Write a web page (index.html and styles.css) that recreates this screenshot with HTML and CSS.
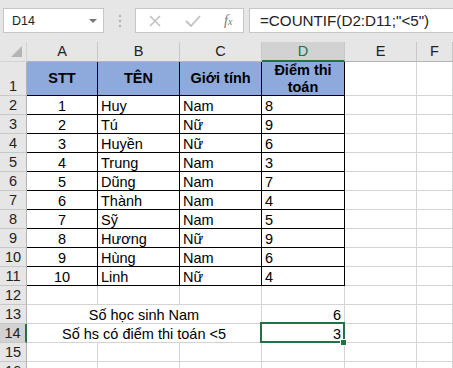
FILE: index.html
```html
<!DOCTYPE html>
<html>
<head>
  <meta charset="utf-8">
  <title>Bảng điểm</title>
  <link rel="stylesheet" href="styles.css">
</head>
<body>

  <div class="thanh-cong-thuc">
    <div class="o-ten">
      <span>D14</span>
      <span class="mui-ten"></span>
    </div>
    <div class="cham">
      <svg width="4" height="14" viewBox="0 0 4 14"><circle cx="2" cy="2" r="1.2" fill="#b4b4b4"/><circle cx="2" cy="7" r="1.2" fill="#b4b4b4"/><circle cx="2" cy="12" r="1.2" fill="#b4b4b4"/></svg>
    </div>
    <div class="nut-cong-thuc">
      <svg class="nut" width="14" height="14" viewBox="0 0 14 14"><path d="M2 2 L12 12 M12 2 L2 12" stroke="#c0c0c0" stroke-width="1.6" fill="none"/></svg>
      <svg class="nut" width="16" height="14" viewBox="0 0 16 14"><path d="M1 7 L6 12 L15 2" stroke="#c0c0c0" stroke-width="1.8" fill="none"/></svg>
      <span class="fx">f<small>x</small></span>
    </div>
    <div class="o-cong-thuc">=COUNTIF(D2:D11;"&lt;5")</div>
  </div>

  <div class="bang">
    <!-- tiêu đề cột -->
    <div class="goc"><span class="tam-giac"></span></div>
    <div class="tc">A</div>
    <div class="tc">B</div>
    <div class="tc">C</div>
    <div class="tc chon">D</div>
    <div class="tc">E</div>
    <div class="tc">F</div>

    <!-- hàng 1 -->
    <div class="th">1</div>
    <div class="o dau">STT</div>
    <div class="o dau">TÊN</div>
    <div class="o dau">Giới tính</div>
    <div class="o dau">Điểm thi toán</div>
    <div class="o"></div>
    <div class="o"></div>

    <div class="th">2</div>
    <div class="o vien giua">1</div><div class="o vien">Huy</div><div class="o vien">Nam</div><div class="o vien">8</div><div class="o"></div><div class="o"></div>
    <div class="th">3</div>
    <div class="o vien giua">2</div><div class="o vien">Tú</div><div class="o vien">Nữ</div><div class="o vien">9</div><div class="o"></div><div class="o"></div>
    <div class="th">4</div>
    <div class="o vien giua">3</div><div class="o vien">Huyền</div><div class="o vien">Nữ</div><div class="o vien">6</div><div class="o"></div><div class="o"></div>
    <div class="th">5</div>
    <div class="o vien giua">4</div><div class="o vien">Trung</div><div class="o vien">Nam</div><div class="o vien">3</div><div class="o"></div><div class="o"></div>
    <div class="th">6</div>
    <div class="o vien giua">5</div><div class="o vien">Dũng</div><div class="o vien">Nam</div><div class="o vien">7</div><div class="o"></div><div class="o"></div>
    <div class="th">7</div>
    <div class="o vien giua">6</div><div class="o vien">Thành</div><div class="o vien">Nam</div><div class="o vien">4</div><div class="o"></div><div class="o"></div>
    <div class="th">8</div>
    <div class="o vien giua">7</div><div class="o vien">Sỹ</div><div class="o vien">Nam</div><div class="o vien">5</div><div class="o"></div><div class="o"></div>
    <div class="th">9</div>
    <div class="o vien giua">8</div><div class="o vien">Hương</div><div class="o vien">Nữ</div><div class="o vien">9</div><div class="o"></div><div class="o"></div>
    <div class="th">10</div>
    <div class="o vien giua">9</div><div class="o vien">Hùng</div><div class="o vien">Nam</div><div class="o vien">6</div><div class="o"></div><div class="o"></div>
    <div class="th">11</div>
    <div class="o vien giua">10</div><div class="o vien">Linh</div><div class="o vien">Nữ</div><div class="o vien">4</div><div class="o"></div><div class="o"></div>

    <div class="th">12</div>
    <div class="o"></div><div class="o"></div><div class="o"></div><div class="o"></div><div class="o"></div><div class="o"></div>

    <div class="th">13</div>
    <div class="o gop giua">Số học sinh Nam</div><div class="o phai">6</div><div class="o"></div><div class="o"></div>

    <div class="th chon">14</div>
    <div class="o gop giua">Số hs có điểm thi toán &lt;5</div><div class="o phai dang-chon">3</div><div class="o"></div><div class="o"></div>

    <div class="th">15</div>
    <div class="o"></div><div class="o"></div><div class="o"></div><div class="o"></div><div class="o"></div><div class="o"></div>

    <div class="th">16</div>
    <div class="o"></div><div class="o"></div><div class="o"></div><div class="o"></div><div class="o"></div><div class="o"></div>
  </div>

</body>
</html>
```

FILE: styles.css
```css
body {
  margin: 0;
  background: #e6e6e6;
  font-family: "Liberation Sans", Arial, sans-serif;
  overflow: hidden;
}

/* thanh công thức */
.thanh-cong-thuc {
  height: 42px;
  display: flex;
  align-items: flex-start;
  padding-top: 8px;
  padding-left: 3px;
  box-sizing: border-box;
}

.o-ten {
  width: 101px;
  height: 25px;
  box-sizing: border-box;
  background: #fff;
  border: 1px solid #c6c6c6;
  display: flex;
  align-items: center;
  justify-content: space-between;
  padding: 0 6px 0 8px;
  font-size: 12.5px;
  color: #222;
}

.mui-ten {
  width: 0;
  height: 0;
  border-left: 4px solid transparent;
  border-right: 4px solid transparent;
  border-top: 4px solid #777;
}

.cham {
  width: 31px;
  height: 25px;
  display: flex;
  align-items: center;
  justify-content: center;
}

.nut-cong-thuc {
  width: 109px;
  height: 25px;
  box-sizing: border-box;
  background: #fff;
  border: 1px solid #c6c6c6;
  display: flex;
  align-items: center;
  padding-left: 12px;
}

.nut {
  margin-right: 23px;
}

.fx {
  font-family: "Liberation Serif", serif;
  font-style: italic;
  font-size: 14px;
  color: #777;
}

.fx small {
  font-size: 10px;
}

.o-cong-thuc {
  margin-left: 5px;
  flex: 1;
  height: 25px;
  box-sizing: border-box;
  background: #fff;
  border: 1px solid #c6c6c6;
  border-right: none;
  padding-left: 10px;
  font-size: 15.2px;
  line-height: 23px;
  color: #222;
}

/* bảng tính */
.bang {
  display: grid;
  grid-template-columns: 27px 71px 82px 82px 83px 72px 1fr;
  grid-template-rows: 20px 34px repeat(15, 19px);
  background: #fff;
}

.bang > div {
  box-sizing: border-box;
  border-right: 1px solid #d4d4d4;
  border-bottom: 1px solid #d4d4d4;
  font-size: 14.5px;
  color: #000;
  white-space: nowrap;
}

.goc {
  background: #e6e6e6;
  position: relative;
}

.tam-giac {
  position: absolute;
  right: 4px;
  bottom: 4px;
  width: 0;
  height: 0;
  border-left: 11px solid transparent;
  border-bottom: 11px solid #b4b4b4;
}

.bang > .tc {
  background: #e6e6e6;
  border-right-color: #c8c8c8;
  border-bottom-color: #b4b4b4;
  color: #222;
  text-align: center;
  line-height: 19px;
}

.bang > .tc.chon {
  background: #d2d2d2;
  color: #217346;
  border-bottom: 2px solid #217346;
  line-height: 18px;
}

.bang > .th {
  background: #e6e6e6;
  border-right-color: #b4b4b4;
  border-bottom-color: #c8c8c8;
  color: #222;
  display: flex;
  align-items: flex-end;
  justify-content: center;
  line-height: 17px;
}

.bang > .th.chon {
  background: #d2d2d2;
  border-right: 2px solid #217346;
}

.bang > .o {
  display: flex;
  align-items: flex-end;
  padding: 0 3px;
  line-height: 16px;
}

.bang > .dau {
  background: #8ea9db;
  border-right-color: #000;
  border-bottom-color: #000;
  font-weight: bold;
  align-items: center;
  justify-content: center;
  text-align: center;
  white-space: normal;
  line-height: 17px;
  padding: 0 10px;
}

.bang > .vien {
  border-right-color: #000;
  border-bottom-color: #000;
}

.bang > .giua {
  justify-content: center;
}

.bang > .phai {
  justify-content: flex-end;
}

.bang > .gop {
  grid-column: span 3;
}

.dang-chon {
  position: relative;
}

.dang-chon::after {
  content: "";
  position: absolute;
  top: -2px;
  left: -2px;
  right: -1px;
  bottom: -1px;
  border: 2px solid #217346;
}

.dang-chon::before {
  content: "";
  position: absolute;
  right: -3px;
  bottom: -4px;
  width: 5px;
  height: 5px;
  background: #217346;
  border: 1px solid #fff;
  z-index: 1;
}
```
